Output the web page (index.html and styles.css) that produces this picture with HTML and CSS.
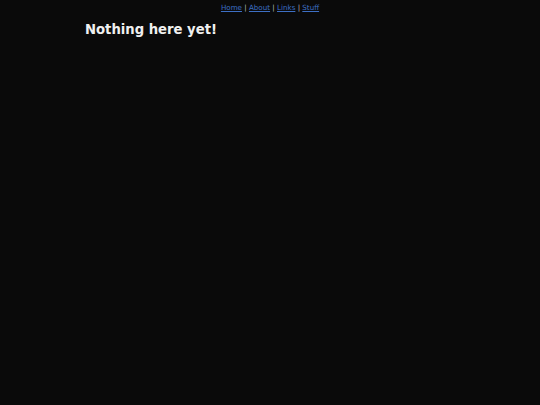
FILE: index.html
```html
<!DOCTYPE html>
<html>
<head>
<meta charset="utf-8">
<link rel="stylesheet" href="styles.css">
</head>
<body>
<nav class="nav">
<a href="#">Home</a> | <a href="#">About</a> | <a href="#">Links</a> | <a href="#">Stuff</a>
</nav>
<main class="content">
<h1 class="title">Nothing here yet!</h1>
</main>
</body>
</html>
```
FILE: styles.css
```css
html, body {
  margin: 0;
  padding: 0;
  background: #0a0a0a;
  height: 100%;
}
body {
  font-family: "DejaVu Sans", sans-serif;
  color: #e8e8e8;
}
.nav {
  text-align: center;
  font-size: 7.15px;
  color: #bbbbbb;
  padding-top: 4px;
  line-height: 8px;
}
.nav a {
  color: #3d6fc4;
}
.content {
  width: 370px;
  margin: 0 auto;
}
.title {
  font-size: 13.2px;
  font-weight: bold;
  margin: 10px 0 0 0;
  color: #f0f0f0;
}
```
